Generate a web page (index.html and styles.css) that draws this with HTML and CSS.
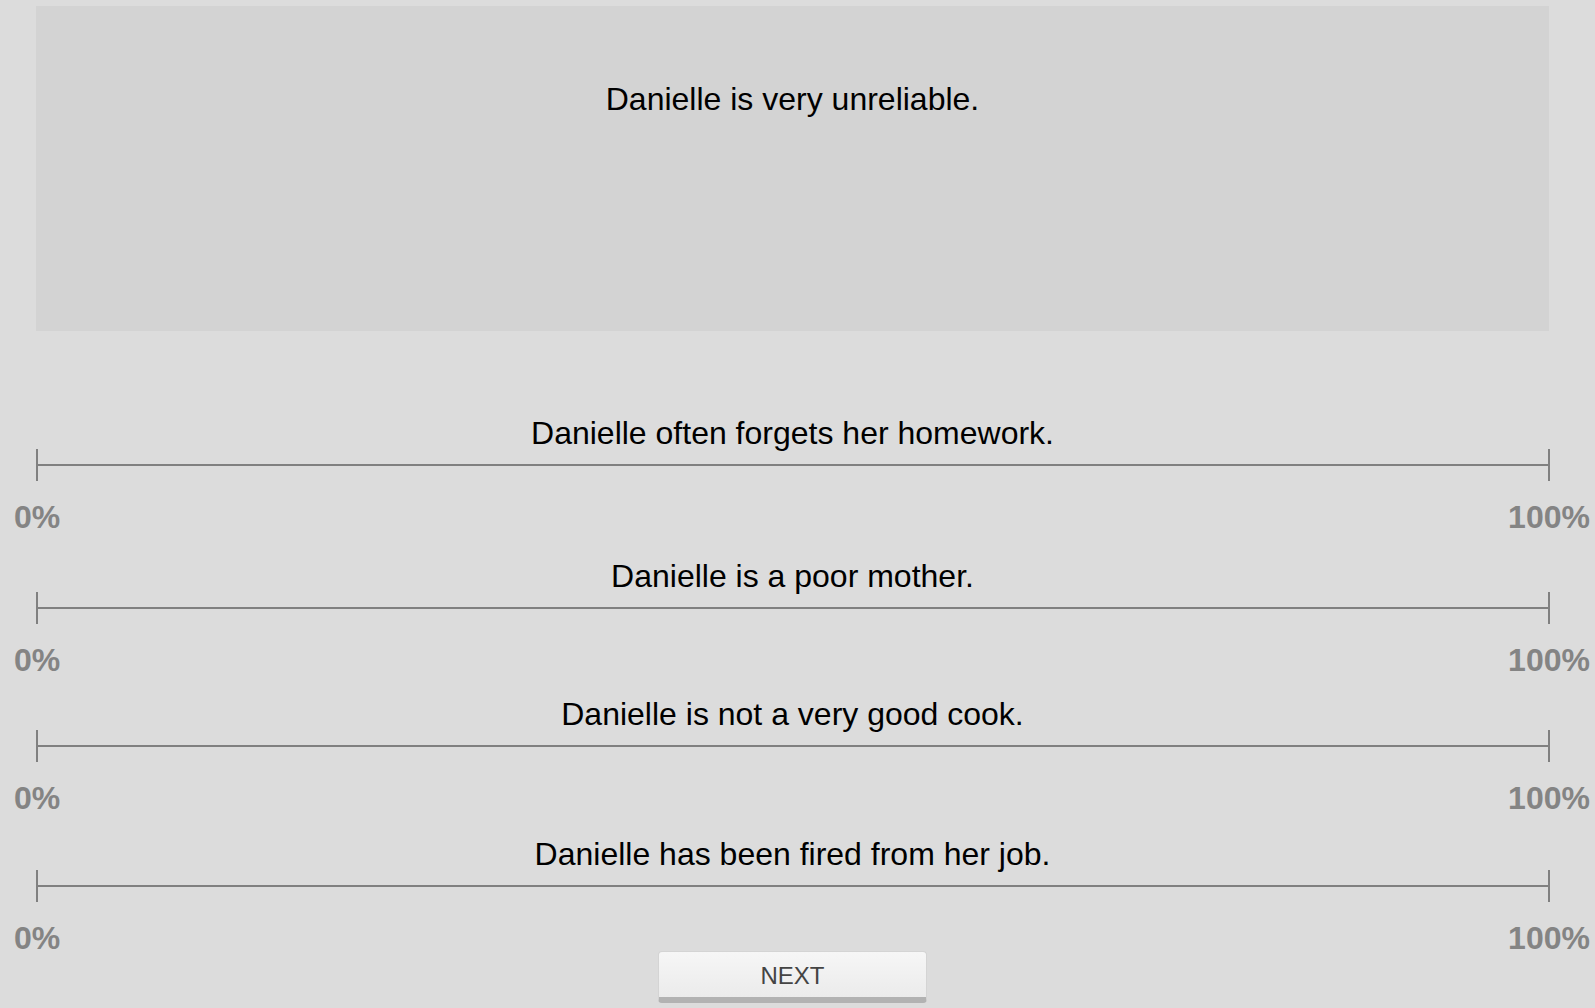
FILE: index.html
```html
<!DOCTYPE html>
<html>
<head>
<meta charset="utf-8">
<link rel="stylesheet" href="styles.css">
</head>
<body>
<div class="page">
  <div class="stimulus">Danielle is very unreliable.</div>
  <div class="sliders">
    <div class="row">
      <div class="prompt">Danielle often forgets her homework.</div>
      <div class="track"><span class="tick"></span><span class="bar"></span><span class="tick"></span></div>
      <div class="labels"><span class="lbl lbl-min">0%</span><span class="lbl lbl-max">100%</span></div>
    </div>
    <div class="row">
      <div class="prompt">Danielle is a poor mother.</div>
      <div class="track"><span class="tick"></span><span class="bar"></span><span class="tick"></span></div>
      <div class="labels"><span class="lbl lbl-min">0%</span><span class="lbl lbl-max">100%</span></div>
    </div>
    <div class="row">
      <div class="prompt">Danielle is not a very good cook.</div>
      <div class="track"><span class="tick"></span><span class="bar"></span><span class="tick"></span></div>
      <div class="labels"><span class="lbl lbl-min">0%</span><span class="lbl lbl-max">100%</span></div>
    </div>
    <div class="row">
      <div class="prompt">Danielle has been fired from her job.</div>
      <div class="track"><span class="tick"></span><span class="bar"></span><span class="tick"></span></div>
      <div class="labels"><span class="lbl lbl-min">0%</span><span class="lbl lbl-max">100%</span></div>
    </div>
  </div>
  <div class="actions"><button class="next">NEXT</button></div>
</div>
</body>
</html>
```
FILE: styles.css
```css
html, body {
  margin: 0;
  padding: 0;
  background: #dcdcdc;
  font-family: "Liberation Sans", Arial, sans-serif;
  color: #000;
  overflow: hidden;
}
.page {
  width: 1513px;
  padding: 6px 0 0 36px;
}
.stimulus {
  height: 250px;
  padding-top: 75px;
  background: #d3d3d3;
  font-size: 32px;
  line-height: 37px;
  text-align: center;
}
.sliders {
  margin-top: 86px;
}
.row:nth-child(2) { margin-top: 27px; }
.row:nth-child(3) { margin-top: 22px; }
.row:nth-child(4) { margin-top: 24px; }
.prompt {
  font-size: 32px;
  line-height: 32px;
  text-align: center;
}
.track {
  display: flex;
  align-items: center;
  height: 32px;
  margin-right: -1px;
}
.tick {
  width: 2px;
  height: 32px;
  background: #808080;
}
.bar {
  flex: 1;
  height: 2px;
  background: #808080;
}
.labels {
  position: relative;
  height: 32px;
  margin-top: 20px;
}
.lbl {
  position: absolute;
  top: 0;
  font-size: 32px;
  line-height: 32px;
  font-weight: bold;
  color: #848484;
  transform: translateX(-50%);
  white-space: nowrap;
}
.lbl-min { left: 1px; }
.lbl-max { left: 100%; }
.actions {
  display: flex;
  justify-content: center;
  margin-top: -3px;
}
.next {
  box-sizing: border-box;
  width: 269px;
  height: 52px;
  padding: 2px 0 0;
  border: 1px solid #d4d4d4;
  border-bottom: 6px solid #b2b2b2;
  border-radius: 4px;
  background: linear-gradient(#f6f6f6, #ebebeb);
  font-family: "Liberation Sans", Arial, sans-serif;
  font-size: 24px;
  color: #444;
}
```
